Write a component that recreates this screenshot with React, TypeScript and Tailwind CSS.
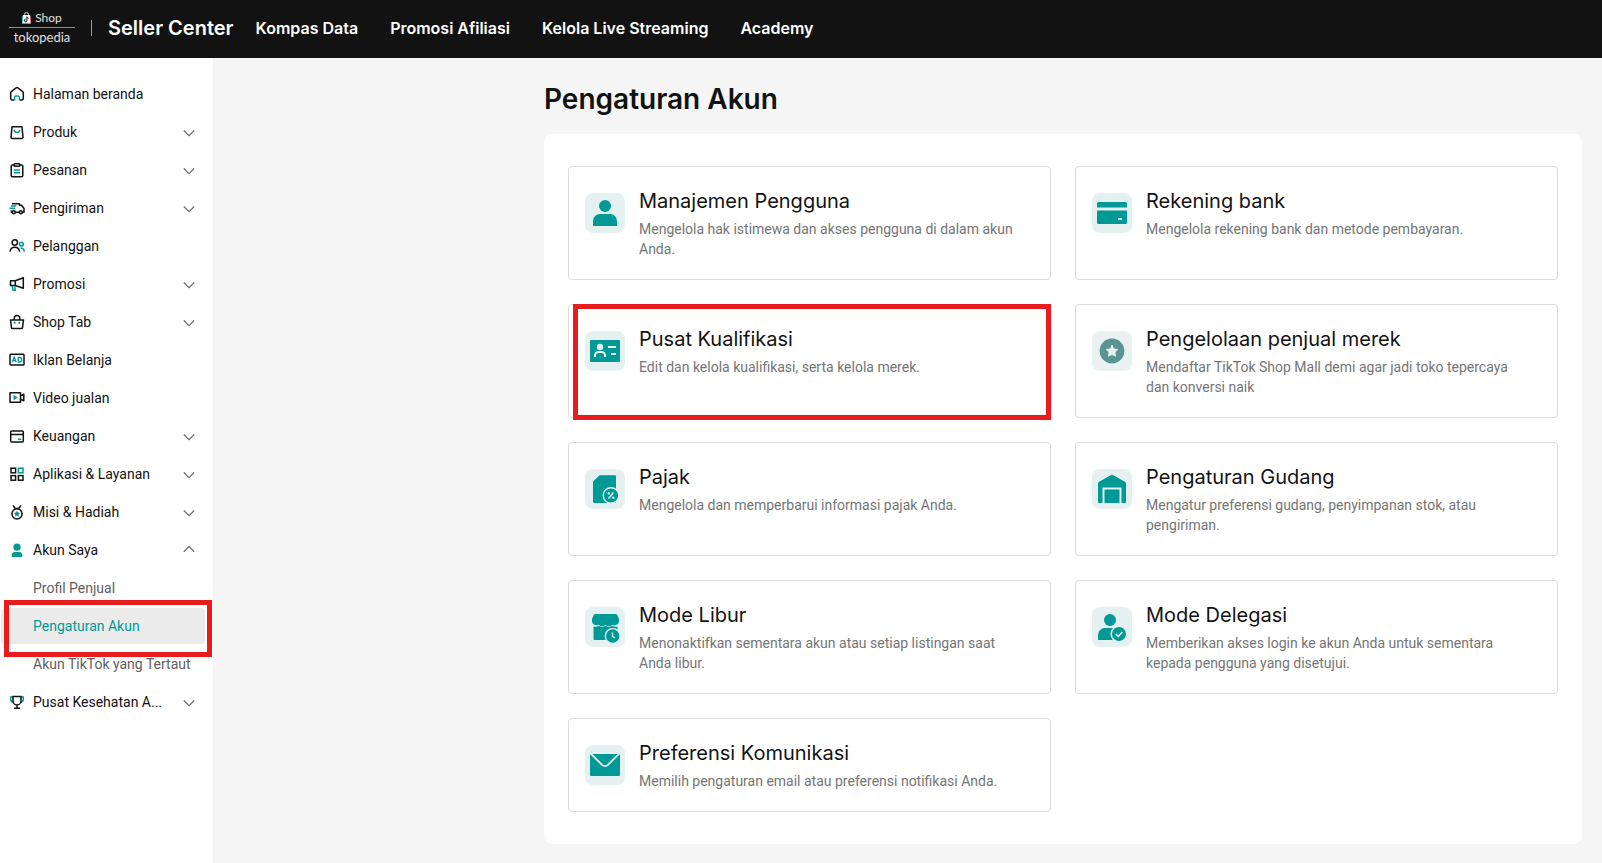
import type { ReactNode } from 'react';

const TEAL = '#009995';
const TINT = '#e5f1f1';

function MenuSvg({ children }: { children: ReactNode }) {
  return (
    <svg className="w-4 h-4 shrink-0" viewBox="0 0 16 16" fill="none" stroke="#121212" strokeWidth="1.5" aria-hidden="true">
      {children}
    </svg>
  );
}

const menuIcons: Record<string, ReactNode> = {
  home: (
    <MenuSvg>
      <path d="M5 14H3.2a1.5 1.5 0 0 1-1.5-1.5V6.8a1.5 1.5 0 0 1 .6-1.2l4.8-3.7a1.5 1.5 0 0 1 1.8 0l4.8 3.7a1.5 1.5 0 0 1 .6 1.2v5.7a1.5 1.5 0 0 1-1.5 1.5H11" />
      <path d="M5.6 14.5v-3a1.4 1.4 0 0 1 1.4-1.4h2a1.4 1.4 0 0 1 1.4 1.4v3" stroke={TEAL} />
    </MenuSvg>
  ),
  produk: (
    <MenuSvg>
      <path d="M3 2.7h10l1 10.6a1 1 0 0 1-1 1.1H3a1 1 0 0 1-1-1.1z" strokeLinejoin="round" />
      <path d="M5 6c.5 1.7 1.6 2.5 3 2.5s2.5-.8 3-2.5" stroke={TEAL} />
    </MenuSvg>
  ),
  pesanan: (
    <MenuSvg>
      <rect x="2.2" y="3" width="11.6" height="11.8" rx="1.2" />
      <rect x="5.2" y="1.7" width="5.6" height="2.6" rx=".8" fill="#fff" />
      <path d="M5 8h6M5 10.7h6" stroke={TEAL} strokeWidth="1.4" />
    </MenuSvg>
  ),
  pengiriman: (
    <MenuSvg>
      <path d="M3 3.7h7.5v1.5h2L15 8.500v3.700h-1.500M10 12.200H6.500M3 12.200h-.6v-1.700" strokeLinejoin="round" />
      <circle cx="4.8" cy="12.300" r="1.500" />
      <circle cx="11.8" cy="12.300" r="1.500" />
      <path d="M1.800 6h5.500M.5 8.300H6" stroke={TEAL} strokeWidth="1.600" />
    </MenuSvg>
  ),
  pelanggan: (
    <MenuSvg>
      <circle cx="5.8" cy="4.5" r="2.7" />
      <path d="M1 13.8c.3-3 2.2-4.6 4.8-4.6s4.5 1.6 4.8 4.6" />
      <circle cx="12.4" cy="6.2" r="1.9" stroke={TEAL} />
      <path d="M11.6 9.9c2.3 0 3.5 1.4 3.7 3.9" stroke={TEAL} />
    </MenuSvg>
  ),
  promosi: (
    <MenuSvg>
      <path d="M1.5 4.7h4.8l8-3v10.6l-8-2.8H1.5zM6.3 4.7v4.8" strokeLinejoin="round" />
      <path d="M3.2 9.8l.8 4.4h2.2l-.5-4" stroke={TEAL} />
    </MenuSvg>
  ),
  shop: (
    <MenuSvg>
      <path d="M1.5 6h13l-1 7.6a1 1 0 0 1-1 .9h-9a1 1 0 0 1-1-.9z" strokeLinejoin="round" />
      <path d="M5.2 6V4.3a2.8 2.8 0 0 1 5.6 0V6" />
      <path d="M4.5 8.8h2.4M9.1 8.8h2.4M5.7 7.7v2.2M10.3 7.7v2.2" stroke={TEAL} strokeWidth="1" />
    </MenuSvg>
  ),
  iklan: (
    <MenuSvg>
      <rect x="1" y="2.2" width="14" height="10.8" rx=".8" />
      <path d="M3.2 10.3L5.2 5l2 5.3M3.9 8.7h2.6M9.3 5.3V10h.9c1.5 0 2.5-.9 2.5-2.3s-1-2.4-2.5-2.4z" stroke={TEAL} strokeWidth="1.3" />
    </MenuSvg>
  ),
  video: (
    <MenuSvg>
      <path d="M1 2.8h10.5v9.4H1z" strokeLinejoin="round" />
      <path d="M11.8 5.7l3-1.5v6.6l-3-1.5" strokeLinejoin="round" />
      <path d="M4.5 4.7v5.6l4.3-2.8z" fill={TEAL} stroke="none" />
    </MenuSvg>
  ),
  keuangan: (
    <MenuSvg>
      <rect x="1.7" y="3" width="12.6" height="11" rx="1" />
      <path d="M1.7 6.5h12.6" />
      <path d="M9 11.3h3.2" stroke={TEAL} />
    </MenuSvg>
  ),
  aplikasi: (
    <MenuSvg>
      <rect x="2" y="2.2" width="4.6" height="4.6" />
      <rect x="9.4" y="2.2" width="4.6" height="4.6" stroke={TEAL} />
      <rect x="2" y="9.6" width="4.6" height="4.6" />
      <rect x="9.4" y="9.6" width="4.6" height="4.6" />
    </MenuSvg>
  ),
  misi: (
    <MenuSvg>
      <circle cx="8" cy="9.8" r="5.1" />
      <path d="M4 1.3l2.200 3.200h3.600L12 1.300" />
      <path d="M8 6.500l1 2.100 2.300.3-1.700 1.500.5 2.300L8 11.600l-2.100 1.100.5-2.300-1.700-1.500 2.300-.3z" fill={TEAL} stroke="none" />
    </MenuSvg>
  ),
  akun: (
    <MenuSvg>
      <circle cx="8" cy="5.2" r="3.600" fill={TEAL} stroke="none" />
      <path d="M2.7 15v-1.500A3.500 3.500 0 0 1 6.200 10h3.600a3.500 3.500 0 0 1 3.500 3.500V15z" fill={TEAL} stroke="none" />
    </MenuSvg>
  ),
  kesehatan: (
    <MenuSvg>
      <path d="M3.8 3H1.700v2.200c0 1.700 1 2.800 2.700 3M12.200 3h2.100v2.200c0 1.700-1 2.800-2.700 3" stroke={TEAL} />
      <path d="M4 2.500h8V7a4 4 0 0 1-8 0zM8 11v3M5 14.200h6" />
    </MenuSvg>
  ),
};

interface MenuItem {
  label: string;
  icon: string;
  state?: 'closed' | 'open';
  children?: { label: string; active?: boolean }[];
}

const menu: MenuItem[] = [
  { label: 'Halaman beranda', icon: 'home' },
  { label: 'Produk', icon: 'produk', state: 'closed' },
  { label: 'Pesanan', icon: 'pesanan', state: 'closed' },
  { label: 'Pengiriman', icon: 'pengiriman', state: 'closed' },
  { label: 'Pelanggan', icon: 'pelanggan' },
  { label: 'Promosi', icon: 'promosi', state: 'closed' },
  { label: 'Shop Tab', icon: 'shop', state: 'closed' },
  { label: 'Iklan Belanja', icon: 'iklan' },
  { label: 'Video jualan', icon: 'video' },
  { label: 'Keuangan', icon: 'keuangan', state: 'closed' },
  { label: 'Aplikasi & Layanan', icon: 'aplikasi', state: 'closed' },
  { label: 'Misi & Hadiah', icon: 'misi', state: 'closed' },
  {
    label: 'Akun Saya',
    icon: 'akun',
    state: 'open',
    children: [
      { label: 'Profil Penjual' },
      { label: 'Pengaturan Akun', active: true },
      { label: 'Akun TikTok yang Tertaut' },
    ],
  },
  { label: 'Pusat Kesehatan A...', icon: 'kesehatan', state: 'closed' },
];

const cards: { title: string; text: string; icon: ReactNode; muted?: boolean; highlight?: boolean }[] = [
  {
    title: 'Manajemen Pengguna',
    text: 'Mengelola hak istimewa dan akses pengguna di dalam akun Anda.',
    icon: (
      <>
        <circle cx="20" cy="13" r="6" />
        <path d="M8 33v-5a7 7 0 0 1 7-7h10a7 7 0 0 1 7 7v5z" />
      </>
    ),
  },
  {
    title: 'Rekening bank',
    text: 'Mengelola rekening bank dan metode pembayaran.',
    icon: (
      <>
        <rect x="5" y="9" width="30" height="22" rx="1.5" />
        <path d="M5 14.500h30v3H5zM26 25h4v2h-4z" fill={TINT} />
      </>
    ),
  },
  {
    title: 'Pusat Kualifikasi',
    text: 'Edit dan kelola kualifikasi, serta kelola merek.',
    highlight: true,
    icon: (
      <>
        <rect x="5" y="9" width="30" height="22" rx="1" />
        <circle cx="15" cy="16" r="3.2" fill={TINT} />
        <path d="M10 26v-1.500a3.500 3.500 0 0 1 3.500-3.500h3a3.500 3.500 0 0 1 3.500 3.500V26M23 16h8M26 23h5" fill="none" stroke={TINT} strokeWidth="2" />
      </>
    ),
  },
  {
    title: 'Pengelolaan penjual merek',
    text: 'Mendaftar TikTok Shop Mall demi agar jadi toko tepercaya dan konversi naik',
    muted: true,
    icon: (
      <>
        <circle cx="20" cy="20" r="12.4" />
        <path d="M20 14l1.8 3.8 4.2.6-3 2.9.7 4.2-3.7-2-3.7 2 .7-4.2-3-2.9 4.200-.6z" fill="#e9f1f1" stroke="#e9f1f1" strokeWidth=".6" strokeLinejoin="round" />
      </>
    ),
  },
  {
    title: 'Pajak',
    text: 'Mengelola dan memperbarui informasi pajak Anda.',
    icon: (
      <>
        <path d="M14.5 6.3H30a1 1 0 0 1 1 1V33a1 1 0 0 1-1 1H9.2A1.2 1.2 0 0 1 8 32.800V12.500z" />
        <circle cx="26" cy="26.5" r="7.8" stroke={TINT} strokeWidth="1.4" />
        <path d="M28.500 23.500l-5 6" stroke={TINT} strokeWidth="1.4" />
        <circle cx="23.7" cy="24.3" r="1.2" fill={TINT} />
        <circle cx="28.3" cy="28.8" r="1.2" fill={TINT} />
      </>
    ),
  },
  {
    title: 'Pengaturan Gudang',
    text: 'Mengatur preferensi gudang, penyimpanan stok, atau pengiriman.',
    icon: (
      <>
        <path d="M20 5.600l13.300 7.400a1.300 1.300 0 0 1 .7 1.200V33a1 1 0 0 1-1 1H7a1 1 0 0 1-1-1V14.200a1.300 1.300 0 0 1 .7-1.200z" />
        <path d="M11.500 34V19.500h17V34" fill="none" stroke={TINT} strokeWidth="2" />
      </>
    ),
  },
  {
    title: 'Mode Libur',
    text: 'Menonaktifkan sementara akun atau setiap listingan saat Anda libur.',
    icon: (
      <>
        <path d="M10.500 7h20a2 2 0 0 1 1.800 1l1.700 4v2.500a4.500 4.500 0 0 1-6.700 3.200 4.500 4.500 0 0 1-6.800 0 4.500 4.500 0 0 1-6.800 0A4.500 4.500 0 0 1 7 14.500V12l1.700-4a2 2 0 0 1 1.800-1z" />
        <path d="M8.500 19.600c2 .4 3.800.2 5.200-.8 2 1.500 4.700 1.500 6.800 0 2 1.500 4.700 1.500 6.800 0 1.400 1 3.200 1.200 5.200.8V33h-23a1 1 0 0 1-1-1z" />
        <circle cx="27.7" cy="29" r="7.4" stroke={TINT} strokeWidth="1.4" />
        <path d="M27.500 25.500v3.800l2.500 1.700" fill="none" stroke={TINT} strokeWidth="1.3" />
      </>
    ),
  },
  {
    title: 'Mode Delegasi',
    text: 'Memberikan akses login ke akun Anda untuk sementara kepada pengguna yang disetujui.',
    icon: (
      <>
        <circle cx="18" cy="13" r="6" />
        <path d="M6 33v-5a7 7 0 0 1 7-7h8v12z" />
        <circle cx="27" cy="27" r="7.8" stroke={TINT} strokeWidth="1.6" />
        <path d="M23.800 27l2.400 2.400 4.200-4.400" fill="none" stroke={TINT} strokeWidth="1.5" />
      </>
    ),
  },
  {
    title: 'Preferensi Komunikasi',
    text: 'Memilih pengaturan email atau preferensi notifikasi Anda.',
    icon: (
      <>
        <path d="M5 9h30v21a1 1 0 0 1-1 1H6a1 1 0 0 1-1-1z" />
        <path d="M5.500 8.300L17 19.800a4.300 4.300 0 0 0 6 0L34.500 8.300" fill="none" stroke={TINT} strokeWidth="1.8" />
      </>
    ),
  },
];

function Chevron({ up }: { up?: boolean }) {
  return (
    <svg className="w-3 h-3 shrink-0 ml-auto" viewBox="0 0 12 12" fill="none" stroke="#707070" strokeWidth="1.3" aria-hidden="true">
      <path d={up ? 'M.8 7.700L6 2.500l5.200 5.200' : 'M.8 4.500L6 9.700l5.200-5.200'} />
    </svg>
  );
}

function Header() {
  return (
    <header className="flex items-center h-[58px] pl-[9px] pb-0.5 bg-[#121212] text-white">
      <a href="#" className="flex flex-col items-center w-[66px] pb-0.5 font-['Lato',sans-serif] text-[#e0e0e0]">
        <span className="flex items-center gap-1 text-xs leading-4">
          <svg className="w-[9px] h-3" viewBox="0 0 9 12" aria-hidden="true">
            <path d="M2.500 3.500v-1a2 2 0 0 1 4 0v1" fill="none" stroke="#ddd" />
            <path d="M.9 3h7.200L9 11.500H0z" fill="#fff" />
            <path d="M0 11.500L.8 4" stroke="#25d0cf" strokeWidth=".8" />
            <path d="M8.900 11.500L8.200 4" stroke="#e8476b" strokeWidth=".8" />
            <path d="M4.900 4.500v4a1.300 1.300 0 1 1-1.200-1.300M4.900 5c.3.8.9 1.200 1.700 1.300" fill="none" stroke="#121212" />
          </svg>
          Shop
        </span>
        <span className="w-full h-px my-px bg-[#8a8a8a]" />
        <span className="text-[13px] leading-4">tokopedia</span>
      </a>
      <span className="w-px h-4 mx-4 bg-[#a0a0a0]" />
      <span className="text-xl font-semibold">Seller Center</span>
      <nav className="flex gap-8 ml-[22px] font-semibold">
        <a href="#">Kompas Data</a>
        <a href="#">Promosi Afiliasi</a>
        <a href="#">Kelola Live Streaming</a>
        <a href="#">Academy</a>
      </nav>
    </header>
  );
}

function Sidebar() {
  return (
    <aside className="w-[213px] shrink-0 pt-[18px] pl-px pr-2 bg-white font-['Roboto',sans-serif] text-sm text-[#121212]">
      <ul className="flex flex-col gap-0.5">
        {menu.map((item) => (
          <li key={item.label}>
            {item.state ? (
              <button type="button" aria-expanded={item.state === 'open'} className="flex items-center gap-2 w-full h-9 pl-2 pr-2.5">
                {menuIcons[item.icon]}
                {item.label}
                <Chevron up={item.state === 'open'} />
              </button>
            ) : (
              <a href="#" className="flex items-center gap-2 h-9 pl-2">
                {menuIcons[item.icon]}
                {item.label}
              </a>
            )}
            {item.children && (
              <ul className="flex flex-col gap-0.5 mt-0.5">
                {item.children.map((child) => (
                  <li key={child.label} className="relative">
                    <a
                      href="#"
                      className={
                        child.active
                          ? 'flex items-center h-9 pl-8 rounded bg-[#ebebeb] text-[#009995]'
                          : 'flex items-center h-9 pl-8 text-[#606060]'
                      }
                    >
                      {child.label}
                    </a>
                    {child.active && (
                      <span className="absolute z-10 -top-2 -bottom-[13px] left-[3px] -right-[7px] border-[5px] border-[#e81c1c] pointer-events-none" />
                    )}
                  </li>
                ))}
              </ul>
            )}
          </li>
        ))}
      </ul>
    </aside>
  );
}

export default function App() {
  return (
    <div className="min-h-screen flex flex-col bg-[#f5f5f5] font-['Inter',sans-serif] text-[#121212]">
      <Header />
      <div className="flex flex-1">
        <Sidebar />
        <main className="flex-1 pl-[331px] pr-5 pt-5 pb-[19px]">
          <h1 className="text-[28px] leading-[42px] font-semibold">Pengaturan Akun</h1>
          <section className="grid grid-cols-2 gap-6 mt-3.5 px-6 py-8 rounded-lg bg-white">
            {cards.map((card) => (
              <a key={card.title} href="#" className="relative flex gap-3.5 pl-4 pr-6 py-5 rounded border border-[#dcdcdc]">
                <svg
                  className={
                    card.muted
                      ? 'w-10 h-10 shrink-0 mt-1.5 rounded-lg bg-[#e9f1f1] fill-[#5a9494]'
                      : 'w-10 h-10 shrink-0 mt-1.5 rounded-lg bg-[#e5f1f1] fill-[#009995]'
                  }
                  viewBox="0 0 40 40"
                  aria-hidden="true"
                >
                  {card.icon}
                </svg>
                <div>
                  <h2 className="text-xl leading-7">{card.title}</h2>
                  <p className="mt-1 font-['Roboto',sans-serif] text-sm leading-5 text-[#757575]">{card.text}</p>
                </div>
                {card.highlight && (
                  <span className="absolute z-10 -top-px -bottom-[3px] left-1 -right-px border-[5px] border-[#e81c1c] pointer-events-none" />
                )}
              </a>
            ))}
          </section>
        </main>
      </div>
    </div>
  );
}
